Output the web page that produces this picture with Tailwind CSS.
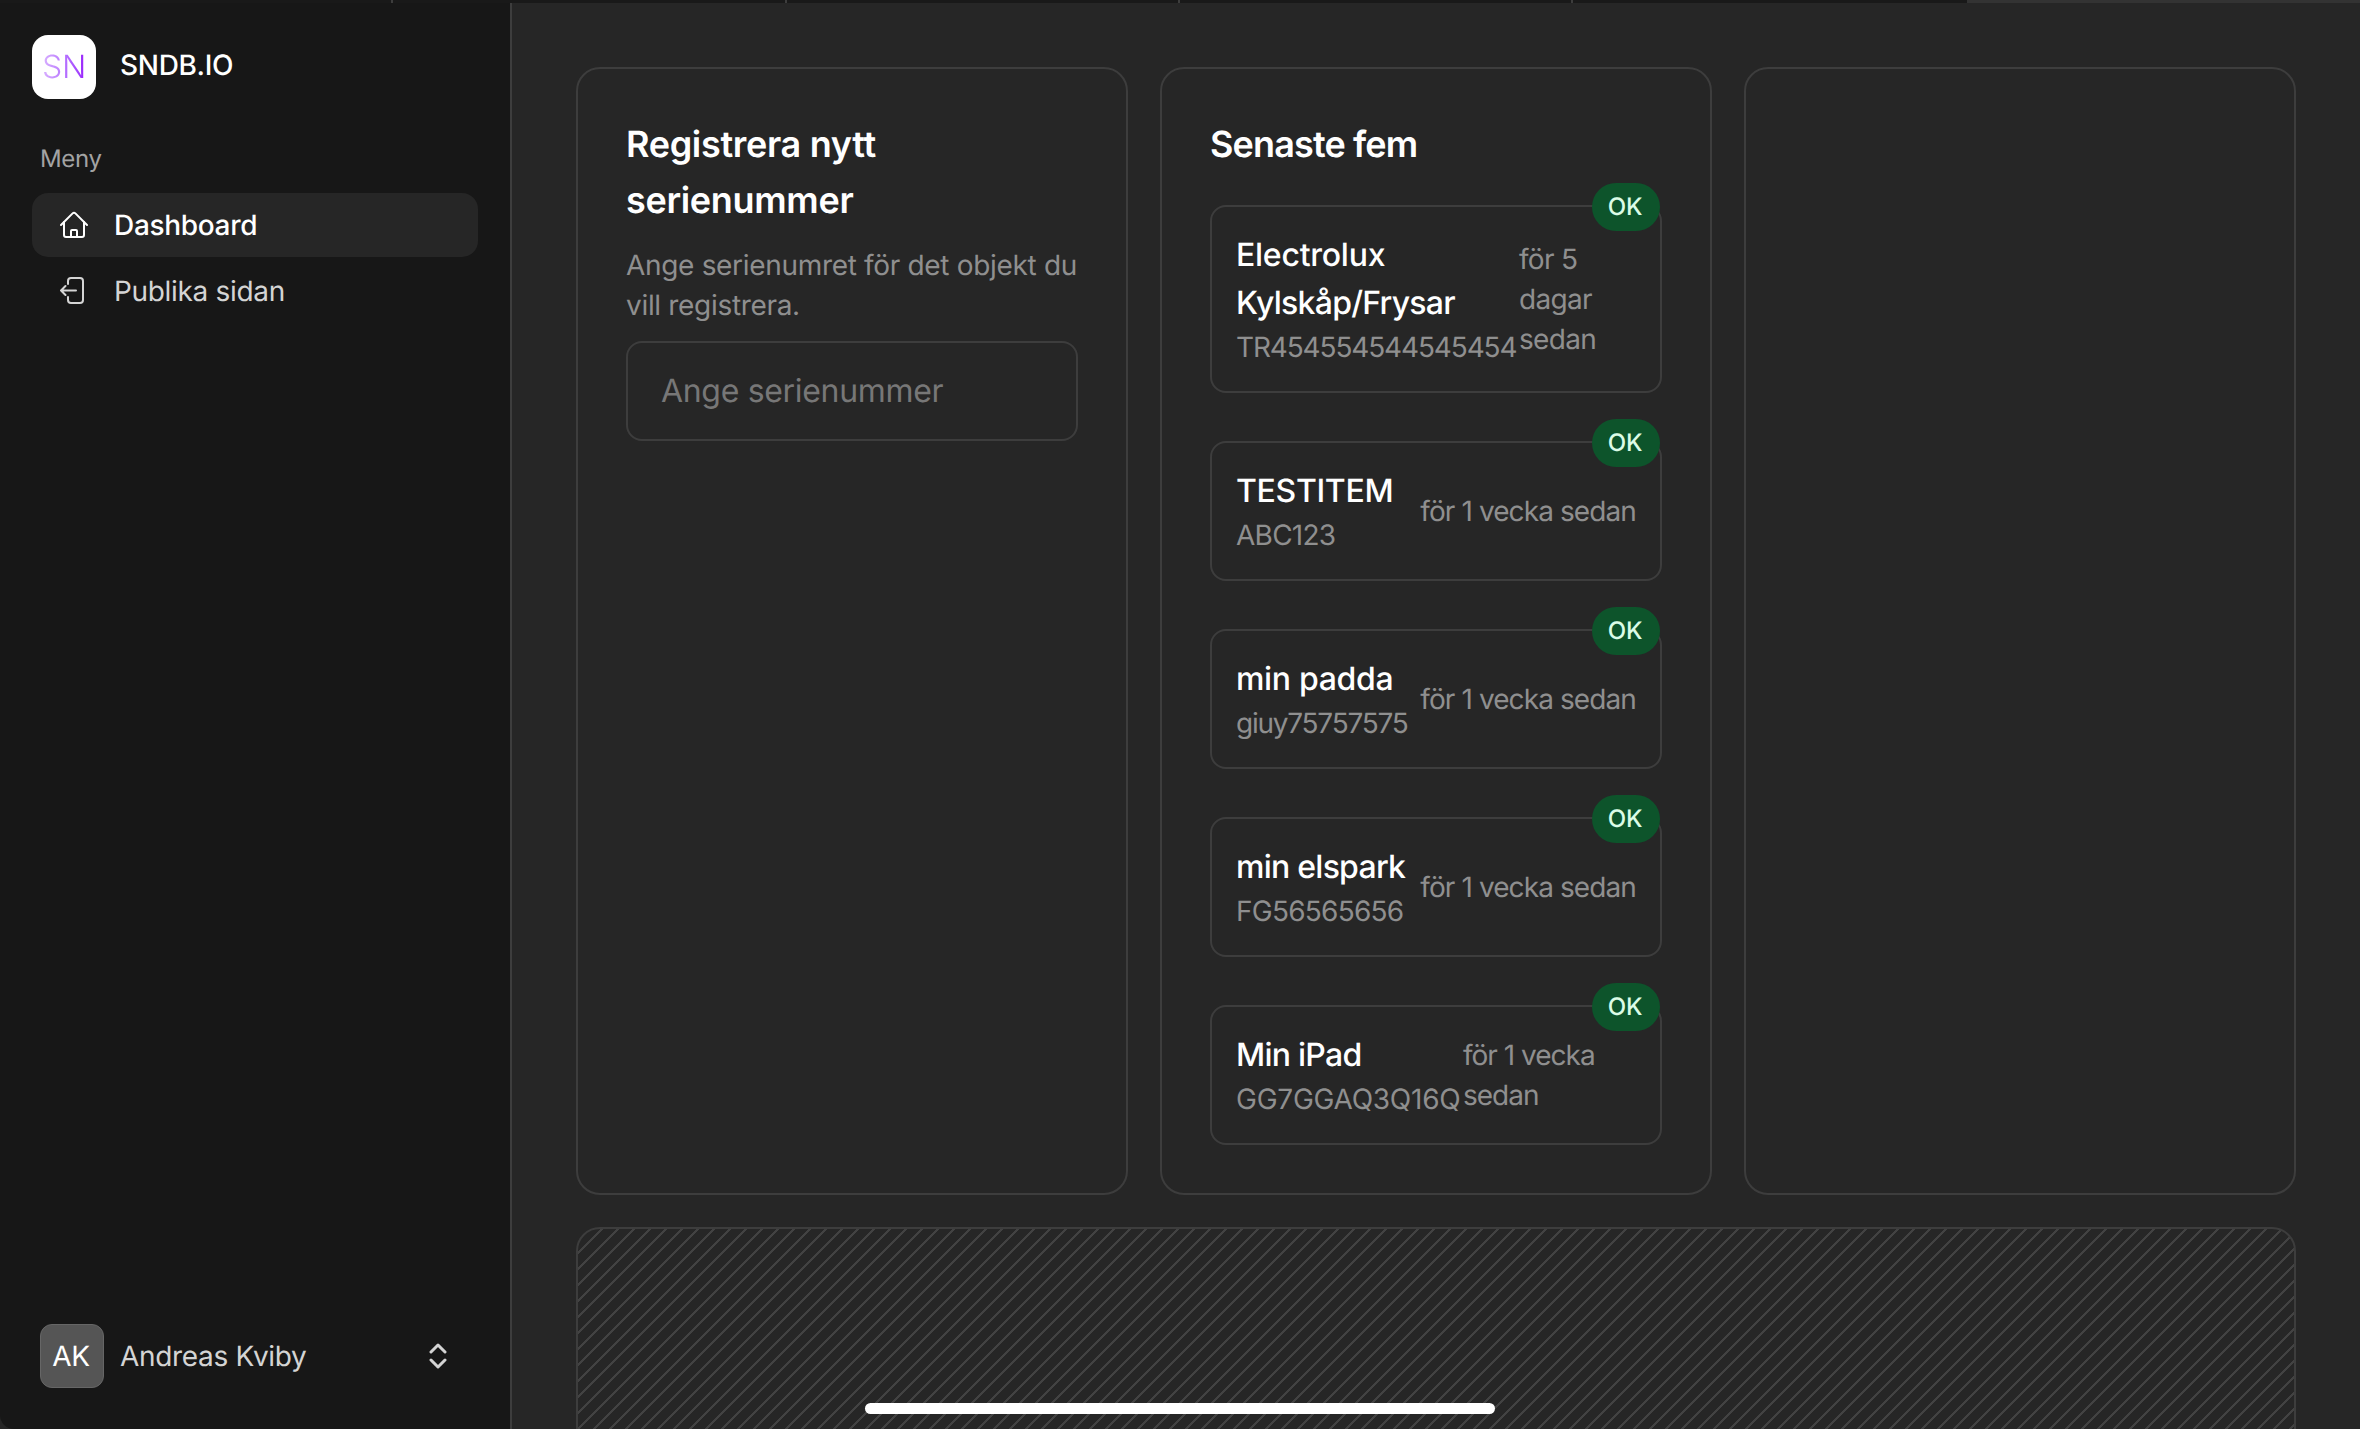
<!DOCTYPE html>
<html lang="sv">
<head>
    <meta charset="UTF-8">
    <meta name="viewport" content="width=device-width, initial-scale=1.0">
    <title>SNDB.IO</title>
    <script src="https://cdn.jsdelivr.net/npm/@tailwindcss/browser@4"></script>
</head>
<body class="bg-black font-[family-name:Inter] text-white tracking-[-0.02em] [text-rendering:geometricPrecision]">
    <div class="relative flex h-[1429px] w-[2360px] flex-col overflow-hidden bg-[#262626]">
        <!-- tab strip -->
        <div class="grid h-[3px] shrink-0 grid-cols-6">
            <div class="bg-[#191919] border-r-2 border-[#3d3d3d]"></div>
            <div class="bg-[#191919] border-r-2 border-[#3d3d3d]"></div>
            <div class="bg-[#191919] border-r-2 border-[#3d3d3d]"></div>
            <div class="bg-[#191919] border-r-2 border-[#3d3d3d]"></div>
            <div class="bg-[#191919]"></div>
            <div class="bg-[#333333]"></div>
        </div>

        <div class="flex min-h-0 flex-1">
            <!-- sidebar -->
            <aside class="flex w-[512px] shrink-0 flex-col rounded-bl-[14px] border-r-2 border-[#3d3d3d] bg-[#171717] p-8 pb-10">
                <div class="flex items-center gap-6">
                    <div class="flex h-16 w-16 items-center justify-center rounded-2xl bg-white">
                        <span class="bg-gradient-to-r from-purple-300 to-purple-600 bg-clip-text text-[32px] font-light text-transparent">SN</span>
                    </div>
                    <span class="text-[28px] font-medium -translate-y-0.5">SNDB.IO</span>
                </div>
                <div class="mt-[44px] px-2 text-2xl leading-8 text-[#a3a3a3]">Meny</div>
                <nav class="mt-[18px] flex flex-col gap-0.5 text-[28px]">
                    <a class="flex h-16 items-center gap-[26px] rounded-2xl bg-[#262626] pl-7 font-medium text-white">
                        <svg class="h-7 w-7 shrink-0" viewBox="0 0 28 28" fill="none" stroke="currentColor" stroke-width="2" stroke-linecap="round" stroke-linejoin="round">
                            <path d="M1 14 12.6 2.400a2 2 0 0 1 2.800 0L27 14"/>
                            <path d="M4 11v13a2 2 0 0 0 2 2h16a2 2 0 0 0 2-2V11"/>
                            <path d="M11 26v-6a1 1 0 0 1 1-1h4a1 1 0 0 1 1 1v6"/>
                        </svg>
                        Dashboard
                    </a>
                    <a class="flex h-16 items-center gap-[26px] rounded-2xl pl-7 text-[#d4d4d4]">
                        <svg class="h-7 w-7 shrink-0" viewBox="0 0 28 28" fill="none" stroke="currentColor" stroke-width="2" stroke-linecap="round" stroke-linejoin="round">
                            <path d="M8 7V4a3 3 0 0 1 3-3h9a3 3 0 0 1 3 3v19a3 3 0 0 1-3 3h-9a3 3 0 0 1-3-3v-3"/>
                            <path d="M16 13.500H1M5.500 9 1 13.500 5.500 18"/>
                        </svg>
                        Publika sidan
                    </a>
                </nav>
                <div class="mt-auto flex -translate-y-px items-center px-2">
                    <div class="flex h-16 w-16 items-center justify-center rounded-xl border border-[#666666] bg-[#555555] pr-0.5 text-[28px]">AK</div>
                    <span class="ml-4 text-[28px] text-[#d4d4d4]">Andreas Kviby</span>
                    <svg class="ml-auto mr-[23px] h-7 w-[18px] text-[#d4d4d4]" viewBox="0 0 18 28" fill="none" stroke="currentColor" stroke-width="3" stroke-linecap="round" stroke-linejoin="round">
                        <path d="M2 10 9 3l7 7M2 18l7 7 7-7"/>
                    </svg>
                </div>
            </aside>

            <!-- main -->
            <main class="min-w-0 flex-1 p-16">
                <div class="grid grid-cols-3 gap-8">
                    <section class="rounded-3xl border-2 border-[#3d3d3d] p-12">
                        <h2 class="-translate-y-[1.5px] text-4xl leading-14 font-semibold">Registrera nytt<br>serienummer</h2>
                        <p class="mt-4 text-[28px] leading-10 text-[#8f8f8f]">Ange serienumret för det objekt du vill registrera.</p>
                        <div class="mt-4 flex h-[100px] items-center rounded-2xl border-2 border-[#3d3d3d] px-[33px] text-[32px] text-[#777777]">Ange serienummer</div>
                    </section>

                    <section class="rounded-3xl border-2 border-[#3d3d3d] p-12">
                        <h2 class="-translate-y-[1.5px] text-4xl leading-14 font-semibold tracking-[-0.85px]">Senaste fem</h2>
                        <div class="mt-8 flex flex-col gap-12">
                            <div class="relative flex items-center rounded-2xl border-2 border-[#3d3d3d] p-6">
                                <div class="w-[283px] shrink-0">
                                    <div class="text-[32px] leading-12 font-medium"><span class="tracking-[-0.25px]">Electrolux</span><br><span class="tracking-[-0.75px]">Kylskåp/Frysar</span></div>
                                    <div class="whitespace-nowrap text-[28px] leading-10 tracking-[-1.15px] text-[#8f8f8f]">TR454554544545454</div>
                                </div>
                                <div class="text-[28px] leading-10 tracking-[-0.7px] text-[#8f8f8f]">för 5<br>dagar<br>sedan</div>
                                <span class="absolute -top-[24px] right-0 flex h-12 w-[68px] items-center justify-center rounded-full bg-green-900 pr-0.5 text-2xl font-medium text-green-100">OK</span>
                            </div>
                            <div class="relative flex items-center justify-between rounded-2xl border-2 border-[#3d3d3d] p-6">
                                <div>
                                    <div class="text-[32px] leading-12 font-medium">TESTITEM</div>
                                    <div class="text-[28px] leading-10 tracking-[-0.75px] text-[#8f8f8f]">ABC123</div>
                                </div>
                                <div class="whitespace-nowrap text-[28px] leading-10 tracking-[-0.9px] text-[#8f8f8f]">för 1 vecka sedan</div>
                                <span class="absolute -top-[24px] right-0 flex h-12 w-[68px] items-center justify-center rounded-full bg-green-900 pr-0.5 text-2xl font-medium text-green-100">OK</span>
                            </div>
                            <div class="relative flex items-center justify-between rounded-2xl border-2 border-[#3d3d3d] p-6">
                                <div>
                                    <div class="text-[32px] leading-12 font-medium">min padda</div>
                                    <div class="text-[28px] leading-10 tracking-[-1.25px] text-[#8f8f8f]">giuy75757575</div>
                                </div>
                                <div class="whitespace-nowrap text-[28px] leading-10 tracking-[-0.9px] text-[#8f8f8f]">för 1 vecka sedan</div>
                                <span class="absolute -top-[24px] right-0 flex h-12 w-[68px] items-center justify-center rounded-full bg-green-900 pr-0.5 text-2xl font-medium text-green-100">OK</span>
                            </div>
                            <div class="relative flex items-center justify-between rounded-2xl border-2 border-[#3d3d3d] p-6">
                                <div>
                                    <div class="text-[32px] leading-12 font-medium tracking-[-0.75px]">min elspark</div>
                                    <div class="text-[28px] leading-10 tracking-[-0.75px] text-[#8f8f8f]">FG56565656</div>
                                </div>
                                <div class="whitespace-nowrap text-[28px] leading-10 tracking-[-0.9px] text-[#8f8f8f]">för 1 vecka sedan</div>
                                <span class="absolute -top-[24px] right-0 flex h-12 w-[68px] items-center justify-center rounded-full bg-green-900 pr-0.5 text-2xl font-medium text-green-100">OK</span>
                            </div>
                            <div class="relative flex items-center rounded-2xl border-2 border-[#3d3d3d] p-6">
                                <div class="w-[227px] shrink-0">
                                    <div class="text-[32px] leading-12 font-medium tracking-[-0.75px]">Min iPad</div>
                                    <div class="whitespace-nowrap text-[28px] leading-10 tracking-[-0.25px] text-[#8f8f8f]">GG7GGAQ3Q16Q</div>
                                </div>
                                <div class="text-[28px] leading-10 tracking-[-1px] text-[#8f8f8f]">för 1 vecka<br>sedan</div>
                                <span class="absolute -top-[24px] right-0 flex h-12 w-[68px] items-center justify-center rounded-full bg-green-900 pr-0.5 text-2xl font-medium text-green-100">OK</span>
                            </div>
                        </div>
                    </section>

                    <section class="rounded-3xl border-2 border-[#3d3d3d]"></section>
                </div>

                <div class="mt-8 h-[400px] rounded-3xl border-2 border-[#3d3d3d] bg-[repeating-linear-gradient(135deg,transparent_0,transparent_4.7px,#424242_4.7px,#424242_6.7px,transparent_6.7px,transparent_11.314px)]"></div>
            </main>
        </div>

        <!-- home indicator -->
        <div class="absolute bottom-[15px] left-[865px] h-[11px] w-[630px] rounded-full bg-white"></div>
    </div>
</body>
</html>
